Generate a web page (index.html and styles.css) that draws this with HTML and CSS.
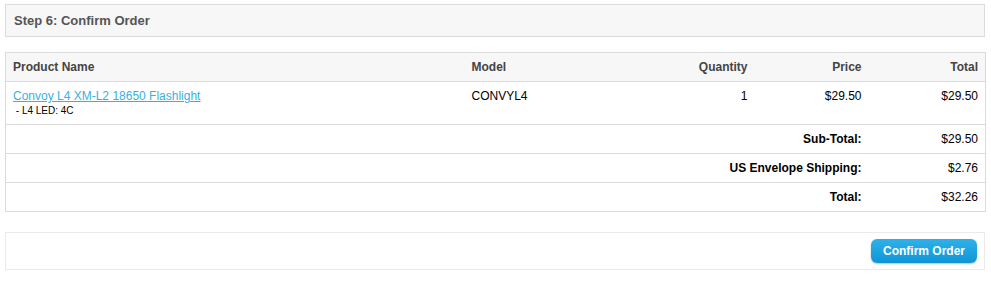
FILE: index.html
```html
<!DOCTYPE html>
<html>
<head>
<meta charset="utf-8">
<link rel="stylesheet" href="styles.css">
</head>
<body>
<div class="page">
  <div class="checkout-heading">Step 6: Confirm Order</div>
  <div class="checkout-product">
    <table>
      <colgroup>
        <col class="c-name"><col class="c-model"><col class="c-qty"><col class="c-price"><col class="c-total">
      </colgroup>
      <thead>
        <tr>
          <td class="name">Product Name</td>
          <td class="model">Model</td>
          <td class="right">Quantity</td>
          <td class="right">Price</td>
          <td class="right">Total</td>
        </tr>
      </thead>
      <tbody>
        <tr class="product">
          <td class="name"><a href="#">Convoy L4 XM-L2 18650 Flashlight</a>
            <div class="option">&nbsp;- L4 LED: 4C</div></td>
          <td class="model">CONVYL4</td>
          <td class="right">1</td>
          <td class="right">$29.50</td>
          <td class="right">$29.50</td>
        </tr>
      </tbody>
      <tfoot>
        <tr>
          <td colspan="4" class="right label">Sub-Total:</td>
          <td class="right">$29.50</td>
        </tr>
        <tr>
          <td colspan="4" class="right label">US Envelope Shipping:</td>
          <td class="right">$2.76</td>
        </tr>
        <tr>
          <td colspan="4" class="right label">Total:</td>
          <td class="right">$32.26</td>
        </tr>
      </tfoot>
    </table>
  </div>
  <div class="payment">
    <a href="#" class="button">Confirm Order</a>
  </div>
</div>
</body>
</html>
```
FILE: styles.css
```css
html, body {
  margin: 0;
  padding: 0;
  background: #fff;
}
body {
  font-family: "Liberation Sans", Arial, sans-serif;
  font-size: 12px;
  color: #000;
}
.page {
  width: 980px;
  padding: 4px 0 0 5px;
}
.checkout-heading {
  background: #f7f7f7;
  border: 1px solid #dbdbdb;
  height: 31px;
  line-height: 31px;
  padding: 0 8px;
  font-size: 13px;
  font-weight: bold;
  color: #555;
}
.checkout-product {
  margin-top: 15px;
}
table {
  width: 980px;
  border-collapse: collapse;
  table-layout: fixed;
  border: 1px solid #dbdbdb;
}
col.c-name { width: 459px; }
col.c-model { width: 145px; }
col.c-qty { width: 145px; }
col.c-price { width: 114px; }
col.c-total { width: 117px; }
td {
  padding: 0 7px;
  height: 28px;
  line-height: 15px;
  vertical-align: middle;
  border-bottom: 1px solid #dbdbdb;
}
thead td {
  background: #f7f7f7;
  font-weight: bold;
  color: #444;
}
tbody tr.product td {
  vertical-align: top;
  padding-top: 7px;
  padding-bottom: 6px;
  height: auto;
}
tbody .option {
  font-size: 10px;
  line-height: 15px;
  margin-top: -1px;
}
a {
  color: #38b0e3;
}
.right {
  text-align: right;
}
tfoot .label {
  font-weight: bold;
}
.payment {
  margin-top: 20px;
  border: 1px solid #ebebeb;
  padding: 6px 7px 6px 7px;
  display: flex;
  justify-content: flex-end;
}
.button {
  display: inline-block;
  height: 24px;
  line-height: 24px;
  padding: 0 12px;
  border-radius: 6px;
  background: linear-gradient(#2eb1ea, #0f95d7);
  box-shadow: 0 1px 2px rgba(0,0,0,0.25);
  color: #fff;
  font-weight: bold;
  font-size: 12px;
  text-decoration: none;
}
```
